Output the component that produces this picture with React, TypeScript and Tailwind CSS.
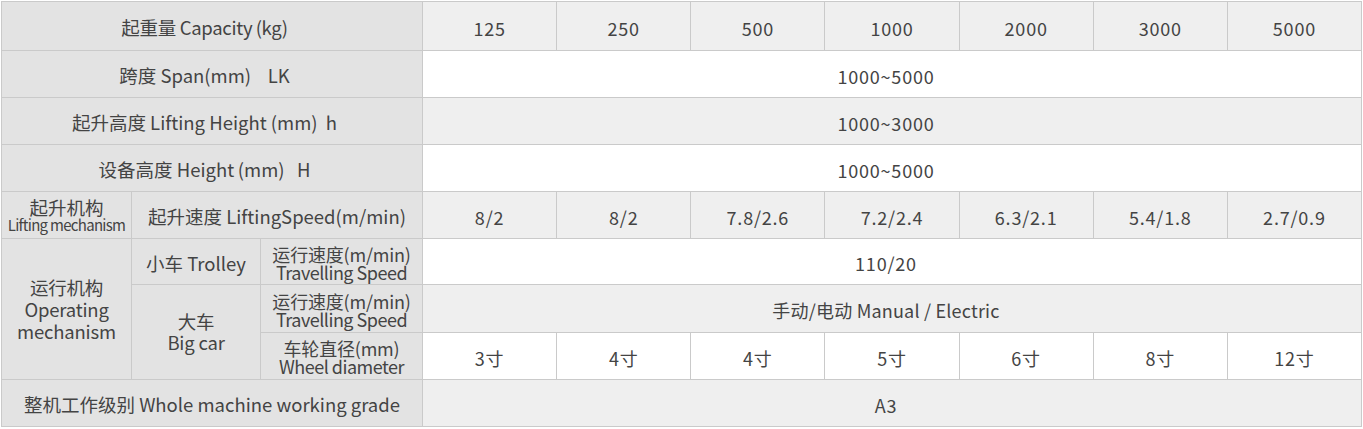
import React from "react";

const font = { fontFamily: '"Noto Sans CJK SC", "Noto Sans", sans-serif' };

function Cell({
  children,
  className = "",
}: {
  children: React.ReactNode;
  className?: string;
}) {
  return (
    <div
      className={
        "flex flex-col items-center justify-center text-center text-[#444444] " +
        className
      }
    >
      {children}
    </div>
  );
}

const L = "bg-[#e3e3e3] text-[18.5px] leading-[1.15] pt-[4px]";
const LS = "bg-[#e3e3e3] text-[18.5px] leading-[1.15] pt-[4px] pr-[15px]";
const G = "bg-[#efefef] text-[18px] tracking-[0.8px] leading-[1.15] pt-[4px]";
const W = "bg-white text-[18px] tracking-[0.8px] leading-[1.15] pt-[4px]";
const GS = "bg-[#efefef] text-[18px] tracking-[0.8px] leading-[1.15] pt-[4px] pr-[12px]";
const WS = "bg-white text-[18px] tracking-[0.8px] leading-[1.15] pt-[4px] pr-[12px]";
const L2 = "bg-[#e3e3e3] text-[18px] tracking-[-0.2px] leading-[18px] pt-[2px]";

export default function App() {
  const caps = ["125", "250", "500", "1000", "2000", "3000", "5000"];
  const speeds = ["8/2", "8/2", "7.8/2.6", "7.2/2.4", "6.3/2.1", "5.4/1.8", "2.7/0.9"];
  const wheels = ["3寸", "4寸", "4寸", "5寸", "6寸", "8寸", "12寸"];
  return (
    <div className="bg-white w-[1363px] h-[429px] pt-px pl-px" style={font}>
      <div className="grid w-[1361px] grid-cols-[129px_128px_161px_repeat(7,minmax(0,1fr))] grid-rows-[48px_46px_46px_46px_46px_45px_47px_46px_46px] gap-px border border-[#cacaca] bg-[#cacaca]">
        {/* row 0 */}
        <Cell className={`col-span-3 ${LS}`}>
          <span className="tracking-[-0.3px]">起重量 Capacity{"\u2009"}(kg)</span>
        </Cell>
        {caps.map((c, i) => (
          <Cell key={"c" + i} className={G}>
            {c}
          </Cell>
        ))}
        {/* row 1 */}
        <Cell className={`col-span-3 ${LS}`}>
          <span className="whitespace-pre">跨度 Span(mm)    LK</span>
        </Cell>
        <Cell className={`col-span-7 ${WS}`}>1000~5000</Cell>
        {/* row 2 */}
        <Cell className={`col-span-3 ${LS}`}>
          <span className="whitespace-pre">起升高度 Lifting Height (mm)  h</span>
        </Cell>
        <Cell className={`col-span-7 ${GS}`}>1000~3000</Cell>
        {/* row 3 */}
        <Cell className={`col-span-3 ${LS}`}>
          <span className="whitespace-pre">设备高度 Height{"\u2009"}(mm)   H</span>
        </Cell>
        <Cell className={`col-span-7 ${WS}`}>1000~5000</Cell>
        {/* row 4 */}
        <Cell className="bg-[#e3e3e3] pt-[2px]">
          <span className="text-[18.5px] leading-[18px]">起升机构</span>
          <span className="text-[15px] leading-[18px] tracking-[-0.7px] whitespace-nowrap">Lifting mechanism</span>
        </Cell>
        <Cell className={`col-span-2 ${L}`}>起升速度 LiftingSpeed(m/min)</Cell>
        {speeds.map((c, i) => (
          <Cell key={"s" + i} className={G}>
            {c}
          </Cell>
        ))}
        {/* row 5 */}
        <Cell className="row-span-3 bg-[#e3e3e3] text-[18.5px] tracking-[-0.2px] leading-[22px] pb-[1px]">
          <span>运行机构</span>
          <span>Operating</span>
          <span>mechanism</span>
        </Cell>
        <Cell className={L}>小车 Trolley</Cell>
        <Cell className={L2}>
          <span className="whitespace-nowrap">运行速度(m/min)</span>
          <span className="whitespace-nowrap tracking-[-0.5px]">Travelling Speed</span>
        </Cell>
        <Cell className={`col-span-7 ${WS}`}>110/20</Cell>
        {/* row 6 */}
        <Cell className="row-span-2 bg-[#e3e3e3] text-[18.5px] tracking-[-0.2px] leading-[21px]">
          <span>大车</span>
          <span>Big car</span>
        </Cell>
        <Cell className={L2}>
          <span className="whitespace-nowrap">运行速度(m/min)</span>
          <span className="whitespace-nowrap tracking-[-0.5px]">Travelling Speed</span>
        </Cell>
        <Cell className={`col-span-7 ${GS}`}>
          <span className="tracking-[0.2px]">手动/电动 Manual / Electric</span>
        </Cell>
        {/* row 7 */}
        <Cell className={L2}>
          <span className="whitespace-nowrap">车轮直径(mm)</span>
          <span className="whitespace-nowrap tracking-[-0.5px]">Wheel diameter</span>
        </Cell>
        {wheels.map((c, i) => (
          <Cell key={"w" + i} className={W}>
            {c}
          </Cell>
        ))}
        {/* row 8 */}
        <Cell className={`col-span-3 ${L}`}>整机工作级别 Whole machine working grade</Cell>
        <Cell className={`col-span-7 ${GS}`}>A3</Cell>
      </div>
    </div>
  );
}
